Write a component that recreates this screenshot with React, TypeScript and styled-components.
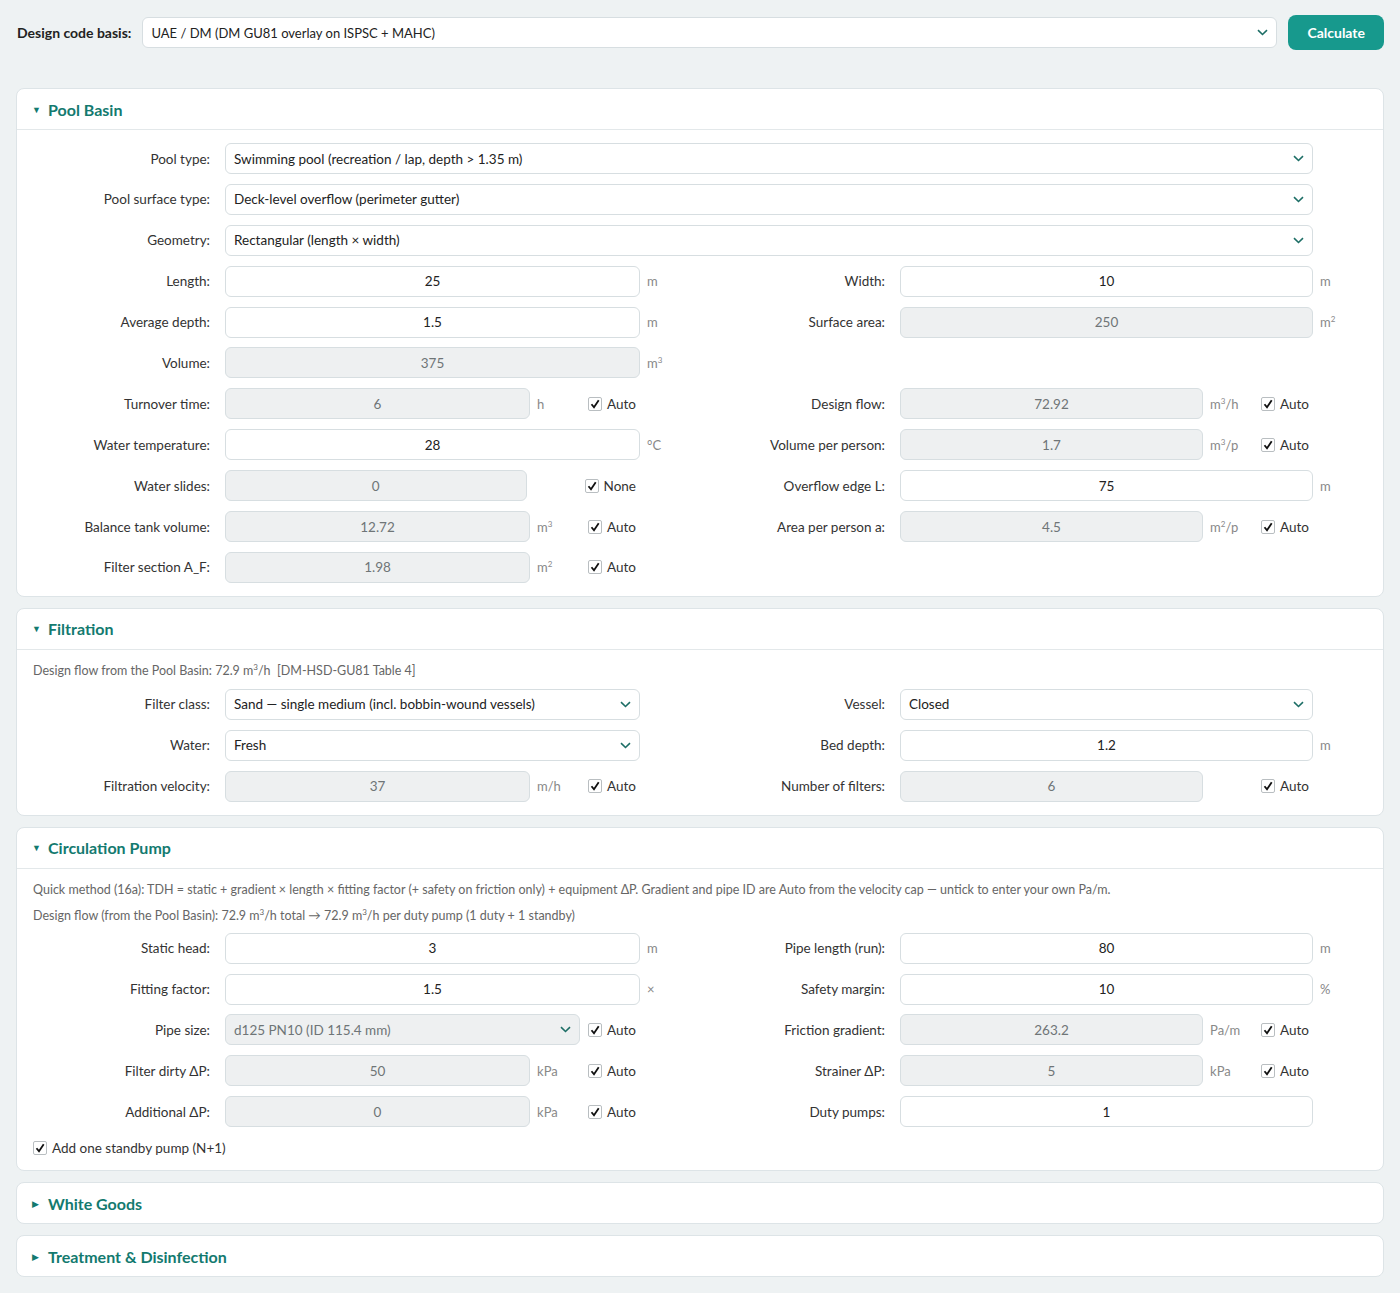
import React from "react";
import styled, { createGlobalStyle } from "styled-components";

const GlobalStyle = createGlobalStyle`
  * { box-sizing: border-box; }
  body {
    margin: 0;
    background: #eef2f3;
    font-family: Lato, "Noto Sans", sans-serif;
    font-size: 13.5px;
    color: #333;
  }
  sup {
    line-height: 0;
    font-size: 8px;
  }
`;

const Page = styled.div`
  display: flex;
  flex-direction: column;
  gap: 11px;
  padding: 15px 16px 16px 16px;
`;

const Toolbar = styled.div`
  display: flex;
  align-items: center;
  gap: 11px;
  margin-bottom: 27px;
`;

const ToolbarLabel = styled.span`
  font-weight: 700;
  font-size: 14px;
  color: #222;
  padding-left: 1px;
`;

const SelectBox = styled.div<{ $disabled?: boolean; $small?: boolean }>`
  flex: 1;
  display: flex;
  align-items: center;
  justify-content: space-between;
  min-width: 0;
  height: 31px;
  padding: 0 8px;
  border: 1px solid #d7dee1;
  border-radius: 6px;
  background: ${({ $disabled }) => ($disabled ? "#eef0f1" : "#fff")};
  color: ${({ $disabled }) => ($disabled ? "#6f7577" : "#222")};
  font-size: ${({ $small }) => ($small ? "13px" : "inherit")};
`;

const Button = styled.button`
  height: 35px;
  padding: 0 19px;
  border: none;
  border-radius: 8px;
  background: #17998d;
  color: #fff;
  font-family: inherit;
  font-size: 14px;
  font-weight: 700;
`;

const Card = styled.section`
  background: #fff;
  border: 1px solid #dde4e7;
  border-radius: 8px;
`;

const CardHeader = styled.div<{ $open: boolean }>`
  display: flex;
  align-items: center;
  gap: 8px;
  height: ${({ $open }) => ($open ? "41px" : "40px")};
  padding: 0 15px;
  border-bottom: ${({ $open }) => ($open ? "1px solid #e3e8ea" : "none")};
  color: #137a6f;
`;

const Caret = styled.span`
  font-size: 9px;
  line-height: 1;
  width: 8px;
`;

const CardTitle = styled.h2`
  margin: 0;
  font-size: 16px;
  font-weight: 700;
`;

const CardBody = styled.div<{ $tight?: boolean }>`
  padding: ${({ $tight }) => ($tight ? "12px" : "13px")} 16px 13px 16px;
`;

const Note = styled.p<{ $last?: boolean }>`
  margin: 0 0 ${({ $last }) => ($last ? "9px" : "8px")} 0;
  font-size: 12.5px;
  line-height: 18px;
  color: #666;
`;

const FormGrid = styled.div`
  display: grid;
  grid-template-columns: 192px 415px 52px 1fr 413px 54px;
  row-gap: 9.9px;
  align-items: center;
`;

const Label = styled.label<{ $col: number }>`
  grid-column: ${({ $col }) => $col};
  text-align: right;
  padding-right: 15px;
  color: #333;
`;

const Field = styled.div<{ $col: number; $span?: number; $check?: boolean }>`
  grid-column: ${({ $col, $span }) => ($span ? `${$col} / span ${$span}` : $col)};
  display: flex;
  align-items: center;
  min-width: 0;
  padding-right: ${({ $check }) => ($check ? "4px" : "0")};
`;

const Input = styled.input`
  flex: 1;
  min-width: 0;
  height: 31px;
  border: 1px solid #d7dee1;
  border-radius: 6px;
  background: #fff;
  color: #222;
  font-family: inherit;
  font-size: 13.5px;
  text-align: center;

  &:disabled {
    background: #eef0f1;
    color: #6f7577;
  }
`;

const Unit = styled.span<{ $col?: number; $inline?: boolean }>`
  grid-column: ${({ $col }) => $col ?? "auto"};
  width: ${({ $inline }) => ($inline ? "58px" : "auto")};
  flex-shrink: 0;
  padding-left: 7px;
  color: #888;
  font-size: 13px;
`;

const CheckLabel = styled.label`
  display: flex;
  align-items: center;
  gap: 5px;
  flex-shrink: 0;
  color: #333;
`;

const Box = styled.span`
  display: inline-flex;
  align-items: center;
  justify-content: center;
  width: 14px;
  height: 14px;
  border: 1px solid #b9bec1;
  border-radius: 2px;
  background: #fff;
`;

const Spacer = styled.span`
  width: 8px;
  flex-shrink: 0;
`;

const StandbyRow = styled.div`
  display: flex;
  margin-top: 13px;
  margin-bottom: 1px;
`;

function Chevron() {
  return (
    <svg width="11" height="7" viewBox="0 0 11 7" fill="none">
      <path d="M1 1.2 5.5 5.5 10 1.2" stroke="#1d6e66" strokeWidth="1.6" />
    </svg>
  );
}

function Check({ text }: { text: string }) {
  return (
    <CheckLabel>
      <Box>
        <svg width="10" height="10" viewBox="0 0 10 10" fill="none">
          <path d="M1.5 5.2 4 8.3 8.7 1.2" stroke="#111" strokeWidth="1.8" />
        </svg>
      </Box>
      {text}
    </CheckLabel>
  );
}

type Side = "left" | "right";

const cols = (side: Side) => (side === "left" ? [1, 2, 3] : [4, 5, 6]);

function NumberRow(props: {
  side: Side;
  label: string;
  value: string;
  unit?: React.ReactNode;
  disabled?: boolean;
  check?: string;
}) {
  const [l, f, u] = cols(props.side);
  if (props.check) {
    return (
      <>
        <Label $col={l}>{props.label}</Label>
        <Field $col={f} $check>
          <Input value={props.value} disabled={props.disabled} readOnly />
          <Unit $inline>{props.unit}</Unit>
          <Check text={props.check} />
        </Field>
      </>
    );
  }
  return (
    <>
      <Label $col={l}>{props.label}</Label>
      <Field $col={f}>
        <Input value={props.value} disabled={props.disabled} readOnly />
      </Field>
      {props.unit && <Unit $col={u}>{props.unit}</Unit>}
    </>
  );
}

function SelectRow(props: {
  side: Side;
  label: string;
  value: string;
  wide?: boolean;
  disabled?: boolean;
  check?: string;
}) {
  const [l, f] = cols(props.side);
  return (
    <>
      <Label $col={l}>{props.label}</Label>
      <Field $col={f} $span={props.wide ? 4 : undefined} $check={!!props.check}>
        <SelectBox $disabled={props.disabled}>
          <span>{props.value}</span>
          <Chevron />
        </SelectBox>
        {props.check && (
          <>
            <Spacer />
            <Check text={props.check} />
          </>
        )}
      </Field>
    </>
  );
}

function Section(props: { title: string; open?: boolean; tight?: boolean; children?: React.ReactNode }) {
  return (
    <Card>
      <CardHeader $open={!!props.open}>
        <Caret>{props.open ? "▼" : "▶"}</Caret>
        <CardTitle>{props.title}</CardTitle>
      </CardHeader>
      {props.open && <CardBody $tight={props.tight}>{props.children}</CardBody>}
    </Card>
  );
}

const m3 = (
  <>
    m<sup>3</sup>
  </>
);
const m2 = (
  <>
    m<sup>2</sup>
  </>
);

export default function App() {
  return (
    <>
      <GlobalStyle />
      <Page>
        <Toolbar>
          <ToolbarLabel>Design code basis:</ToolbarLabel>
          <SelectBox $small>
            <span>UAE / DM (DM GU81 overlay on ISPSC + MAHC)</span>
            <Chevron />
          </SelectBox>
          <Button>Calculate</Button>
        </Toolbar>

        <Section title="Pool Basin" open>
          <FormGrid>
            <SelectRow side="left" wide label="Pool type:" value="Swimming pool (recreation / lap, depth > 1.35 m)" />
            <SelectRow side="left" wide label="Pool surface type:" value="Deck-level overflow (perimeter gutter)" />
            <SelectRow side="left" wide label="Geometry:" value="Rectangular (length × width)" />

            <NumberRow side="left" label="Length:" value="25" unit="m" />
            <NumberRow side="right" label="Width:" value="10" unit="m" />

            <NumberRow side="left" label="Average depth:" value="1.5" unit="m" />
            <NumberRow side="right" label="Surface area:" value="250" unit={m2} disabled />

            <NumberRow side="left" label="Volume:" value="375" unit={m3} disabled />

            <NumberRow side="left" label="Turnover time:" value="6" unit="h" disabled check="Auto" />
            <NumberRow side="right" label="Design flow:" value="72.92" unit={<>m<sup>3</sup>/h</>} disabled check="Auto" />

            <NumberRow side="left" label="Water temperature:" value="28" unit="°C" />
            <NumberRow side="right" label="Volume per person:" value="1.7" unit={<>m<sup>3</sup>/p</>} disabled check="Auto" />

            <NumberRow side="left" label="Water slides:" value="0" unit="" disabled check="None" />
            <NumberRow side="right" label="Overflow edge L:" value="75" unit="m" />

            <NumberRow side="left" label="Balance tank volume:" value="12.72" unit={m3} disabled check="Auto" />
            <NumberRow side="right" label="Area per person a:" value="4.5" unit={<>m<sup>2</sup>/p</>} disabled check="Auto" />

            <NumberRow side="left" label="Filter section A_F:" value="1.98" unit={m2} disabled check="Auto" />
          </FormGrid>
        </Section>

        <Section title="Filtration" open tight>
          <Note $last>
            Design flow from the Pool Basin: 72.9 m<sup>3</sup>/h&nbsp; [DM-HSD-GU81 Table 4]
          </Note>
          <FormGrid>
            <SelectRow side="left" label="Filter class:" value="Sand — single medium (incl. bobbin-wound vessels)" />
            <SelectRow side="right" label="Vessel:" value="Closed" />

            <SelectRow side="left" label="Water:" value="Fresh" />
            <NumberRow side="right" label="Bed depth:" value="1.2" unit="m" />

            <NumberRow side="left" label="Filtration velocity:" value="37" unit="m/h" disabled check="Auto" />
            <NumberRow side="right" label="Number of filters:" value="6" unit="" disabled check="Auto" />
          </FormGrid>
        </Section>

        <Section title="Circulation Pump" open tight>
          <Note>
            Quick method (16a): TDH = static + gradient × length × fitting factor (+ safety on friction only) + equipment ΔP.
            Gradient and pipe ID are Auto from the velocity cap — untick to enter your own Pa/m.
          </Note>
          <Note>
            Design flow (from the Pool Basin): 72.9 m<sup>3</sup>/h total → 72.9 m<sup>3</sup>/h per duty pump (1 duty + 1
            standby)
          </Note>
          <FormGrid>
            <NumberRow side="left" label="Static head:" value="3" unit="m" />
            <NumberRow side="right" label="Pipe length (run):" value="80" unit="m" />

            <NumberRow side="left" label="Fitting factor:" value="1.5" unit="×" />
            <NumberRow side="right" label="Safety margin:" value="10" unit="%" />

            <SelectRow side="left" label="Pipe size:" value="d125 PN10 (ID 115.4 mm)" disabled check="Auto" />
            <NumberRow side="right" label="Friction gradient:" value="263.2" unit="Pa/m" disabled check="Auto" />

            <NumberRow side="left" label="Filter dirty ΔP:" value="50" unit="kPa" disabled check="Auto" />
            <NumberRow side="right" label="Strainer ΔP:" value="5" unit="kPa" disabled check="Auto" />

            <NumberRow side="left" label="Additional ΔP:" value="0" unit="kPa" disabled check="Auto" />
            <NumberRow side="right" label="Duty pumps:" value="1" />
          </FormGrid>
          <StandbyRow>
            <Check text="Add one standby pump (N+1)" />
          </StandbyRow>
        </Section>

        <Section title="White Goods" />
        <Section title="Treatment & Disinfection" />
      </Page>
    </>
  );
}
